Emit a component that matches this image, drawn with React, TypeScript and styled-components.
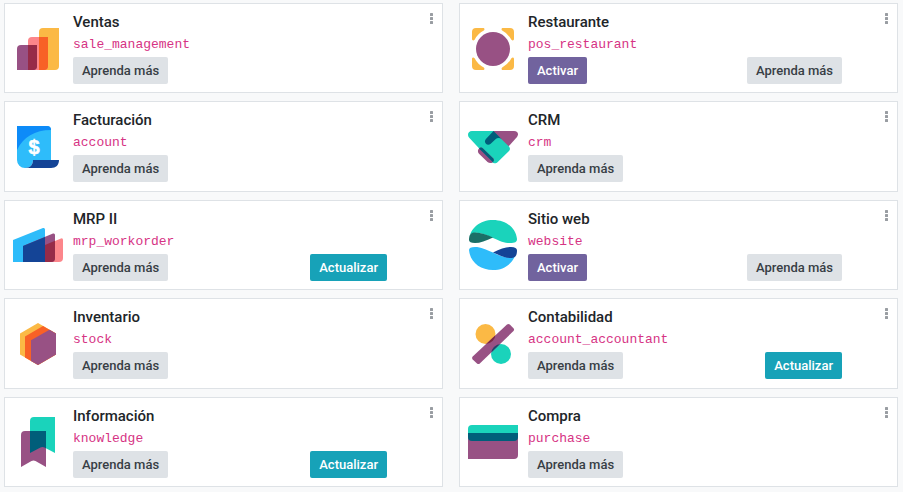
import React from "react";
import styled, { createGlobalStyle, css } from "styled-components";

const GlobalStyle = createGlobalStyle`
  *, *::before, *::after { box-sizing: border-box; }
  body {
    margin: 0;
    background: #f8f9fa;
    color: #212529;
    font-family: Roboto, "Noto Sans", sans-serif;
  }
`;

const Board = styled.main`
  display: grid;
  grid-template-columns: repeat(2, minmax(0, 1fr));
  grid-auto-rows: 1fr;
  gap: 8px 16px;
  min-height: 100vh;
  padding: 3px 5px 5px 4px;
`;

const Card = styled.article`
  display: flex;
  gap: 10px;
  padding: 8px 7px 7px 8px;
  background: #fff;
  border: 1px solid #dee2e6;
`;

const AppIcon = styled.svg`
  flex: none;
  align-self: center;
  width: 50px;
  height: 50px;
`;

const Details = styled.div`
  flex: 1;
  min-width: 0;
`;

const Title = styled.h2`
  margin: 0;
  font-size: 15px;
  font-weight: 500;
  line-height: 20px;
`;

const TechnicalName = styled.code`
  display: block;
  margin-top: 2px;
  color: #d63384;
  font-family: "Liberation Mono", monospace;
  font-size: 13px;
  line-height: 22px;
`;

const Actions = styled.div`
  display: flex;
  justify-content: space-between;
  margin-top: 1px;
  padding-right: 31px;
`;

type Variant = "primary" | "secondary" | "info";

const variants = {
  primary: css`background: #71639e; color: #fff;`,
  secondary: css`background: #dee2e6; color: #383e45;`,
  info: css`background: #17a2b8; color: #fff;`,
};

const ActionButton = styled.button<{ $variant: Variant }>`
  height: 27px;
  padding: 0 9px;
  border: 0;
  border-radius: 2px;
  font: 500 13px/27px Roboto, "Noto Sans", sans-serif;
  white-space: nowrap;
  cursor: pointer;
  ${(p) => variants[p.$variant]}
`;

const MenuButton = styled.button`
  display: flex;
  flex: none;
  justify-content: center;
  width: 7px;
  height: 15px;
  margin-top: 1px;
  padding: 0;
  background: none;
  border: 0;
  color: #999da2;
  cursor: pointer;
`;

const MenuDots = styled.svg`
  flex: none;
  width: 3px;
  height: 11px;
`;

const icons = {
  sales: (
    <>
      <path fill="#FBB945" d="M26 8a4 4 0 0 1 4-4h16v38a4 4 0 0 1-4 4H26Z" />
      <path fill="#FC868B" d="M15 17a4 4 0 0 1 4-4h16v29a4 4 0 0 1-4 4H15Z" />
      <path fill="#F86126" d="M26 13h9v29a4 4 0 0 1-4 4h-5Z" />
      <path fill="#985184" d="M4 25a4 4 0 0 1 4-4h16v21a4 4 0 0 1-4 4H4Z" />
      <path fill="#962B48" d="M15 21h9v21a4 4 0 0 1-4 4h-5Z" />
    </>
  ),
  restaurant: (
    <>
      <path fill="#FBB945" d="M4 8a4 4 0 0 1 4-4h7c1.500 0 2 1.500 .8 2.600A21 21 0 0 0 6.600 15.800C5.500 17 4 16.500 4 15ZM46 8a4 4 0 0 0-4-4h-7c-1.500 0-2 1.500-.8 2.600a21 21 0 0 1 9.200 9.200C44.500 17 46 16.500 46 15ZM4 42a4 4 0 0 0 4 4h7c1.500 0 2-1.500 .8-2.600A21 21 0 0 1 6.600 34.200C5.500 33 4 33.500 4 35ZM46 42a4 4 0 0 1-4 4h-7c-1.500 0-2-1.500-.8-2.600a21 21 0 0 0 9.200-9.200C44.500 33 46 33.500 46 35Z" />
      <circle cx="25" cy="25" r="17" fill="#985184" />
    </>
  ),
  invoicing: (
    <>
      <path fill="#2EBCFA" d="M4 4h30a4 4 0 0 1 4 4v30H20c0 5-3 8-8 8a8 8 0 0 1-8-8Z" />
      <path fill="#0D8BF8" d="M4 4h30a4 4 0 0 1 4 4C22 8 10 15 4 28Z" />
      <path fill="#144496" d="M12 46c5 0 8-3 8-8h26c0 5-3 8-8 8Z" />
      <text x="21" y="32" fill="#fff" stroke="#fff" strokeWidth="0.500" fontFamily="Liberation Sans, sans-serif" fontSize="20" fontWeight="700" textAnchor="middle">$</text>
    </>
  ),
  crm: (
    <>
      <path fill="#985184" d="M25 9h21c4 0 5 3.500 3 6l-8.500 9.500L25 15Z" />
      <path fill="#1AD3BB" d="M4 9h21l16 15.500c1.300 1.500 1.300 3 0 4.500L30 39.700c-2 2-4.500 2-6.500 0L1 15.500C-1 13 0 9 4 9Z" />
      <path fill="#005E7A" d="m25.500 9 8.300 8.200c-2-1.700-4.600-1.600-6.300 0l-4.800 4.600c-1.500 1.300-3.500 1.300-4.800 0s-1.300-3.300 0-4.700Z" />
      <path fill="#985184" d="M11 26.500c1.200-1.200 2.800-1.200 4 0L26 37c-.5 4.500-4 5-6.500 3L11 31.700c-1.500-1.700-1.500-3.700 0-5.200Z" />
      <path fill="#005E7A" d="M11 26.500c1.200-1.200 2.800-1.200 4 0l10.500 10.200q1 1.500-.5 3.600L11 26.500Z" />
    </>
  ),
  mrp: (
    <>
      <path fill="#2EBCFA" d="M0 20 30 8q2-.5 2 1.500V42H0Z" />
      <path fill="#FC868B" d="M22 29.200 48 18.400q2-.5 2 1.600v18a4 4 0 0 1-4 4H22Z" />
      <path fill="#985184" d="M10 26 40 13.500q2-.5 2 1.500v23a4 4 0 0 1-4 4H10Z" />
      <path fill="#144496" d="m10 26 22-9v25H10Z" />
      <path fill="#962B48" d="m32 25 10-4.200V38a4 4 0 0 1-4 4h-6Z" />
    </>
  ),
  website: (
    <>
      <path fill="#1AD3BB" d="M1 20C2 8 12 0 25 0s23 8 24 19c0 3-2 4-7 4-6 0-10-2-17-5C16 14 9 11 3 14c-1 1-2 3-2 6Z" />
      <path fill="#1B6F67" d="M1 20c0-4 1-7 5-7.500 6-.5 12 2 19 5C18 21 12 23 7 23c-4 0-6-1-6-3Z" />
      <path fill="#2EBCFA" d="M1 30c0-2 2-3 6-3 6 0 11 2.500 18 5.500 8 4 16 7 22 3.500C43 45 35 50 25 50 12 50 2 42 1 30Z" />
      <path fill="#144496" d="M25 32.500C32 29 38 27 43 27c4 0 6 1.200 6 3.500 0 4-1 7-5 7.500-6 .5-12-2.300-19-5.500Z" />
    </>
  ),
  inventory: (
    <>
      <path fill="#FBB945" d="m25 4 18 10.500v21L25 46 7 35.500v-21Z" />
      <path fill="#F86126" d="M30 7 43 14.500v21L25 46l-13-7.500V17.500Z" />
      <path fill="#985184" d="m36.500 10.700 6.500 3.800v21L25 46l-7-4V21.300Z" />
    </>
  ),
  accounting: (
    <>
      <defs>
        <clipPath id="ledger-bar">
          <path d="m39 5.500q1.400-1.200 2.800 0l3.700 3.700q1.200 1.400 0 2.800L11.800 44.500q-1.400 1.200-2.800 0l-4.300-4.100q-1.200-1.400 0-2.800Z" />
        </clipPath>
      </defs>
      <circle cx="17.500" cy="15" r="10" fill="#FBB945" />
      <circle cx="33" cy="35" r="10" fill="#1AD3BB" />
      <g clipPath="url(#ledger-bar)">
        <path fill="#985184" d="M0 0h50v50H0Z" />
        <circle cx="17.500" cy="15" r="10" fill="#7D2945" />
        <circle cx="33" cy="35" r="10" fill="#23456D" />
      </g>
    </>
  ),
  knowledge: (
    <>
      <path fill="#1AD3BB" d="M17 4a4 4 0 0 1 4-4h21v36l-10.500-5.500q-2-1-4 0L17 36Z" />
      <path fill="#985184" d="M8 18a4 4 0 0 1 4-4h21v36l-10.500-6q-2-1-4 0L8 50Z" />
      <path fill="#005E7A" d="M17 14h16v17.300l-1.500-.8q-2-1-4 0L17 36Z" />
    </>
  ),
  purchase: (
    <>
      <path fill="#985184" d="M0 16h50v22a4 4 0 0 1-4 4H0Z" />
      <path fill="#1AD3BB" d="M0 12a4 4 0 0 1 4-4h46v8H0Z" />
      <path fill="#005E7A" d="M0 16h50v4a4 4 0 0 1-4 4H4a4 4 0 0 1-4-4Z" />
    </>
  ),
};

interface Module {
  title: string;
  name: string;
  icon: keyof typeof icons;
  actions: [string, Variant][];
}

const learn: [string, Variant] = ["Aprenda más", "secondary"];
const activate: [string, Variant] = ["Activar", "primary"];
const upgrade: [string, Variant] = ["Actualizar", "info"];

const modules: Module[] = [
  { title: "Ventas", name: "sale_management", icon: "sales", actions: [learn] },
  { title: "Restaurante", name: "pos_restaurant", icon: "restaurant", actions: [activate, learn] },
  { title: "Facturación", name: "account", icon: "invoicing", actions: [learn] },
  { title: "CRM", name: "crm", icon: "crm", actions: [learn] },
  { title: "MRP II", name: "mrp_workorder", icon: "mrp", actions: [learn, upgrade] },
  { title: "Sitio web", name: "website", icon: "website", actions: [activate, learn] },
  { title: "Inventario", name: "stock", icon: "inventory", actions: [learn] },
  { title: "Contabilidad", name: "account_accountant", icon: "accounting", actions: [learn, upgrade] },
  { title: "Información", name: "knowledge", icon: "knowledge", actions: [learn, upgrade] },
  { title: "Compra", name: "purchase", icon: "purchase", actions: [learn] },
];

function ModuleCard({ title, name, icon, actions }: Module) {
  return (
    <Card>
      <AppIcon viewBox="0 0 50 50" aria-hidden="true">{icons[icon]}</AppIcon>
      <Details>
        <Title>{title}</Title>
        <TechnicalName>{name}</TechnicalName>
        <Actions>
          {actions.map(([label, variant]) => (
            <ActionButton key={label} type="button" $variant={variant}>{label}</ActionButton>
          ))}
        </Actions>
      </Details>
      <MenuButton type="button" aria-label={`Opciones de ${title}`}>
        <MenuDots viewBox="0 0 3 11" fill="currentColor" aria-hidden="true">
          <rect width="3" height="3" rx="0.500" />
          <rect y="4" width="3" height="3" rx="0.500" />
          <rect y="8" width="3" height="3" rx="0.500" />
        </MenuDots>
      </MenuButton>
    </Card>
  );
}

export default function App() {
  return (
    <>
      <GlobalStyle />
      <Board>
        {modules.map((module) => <ModuleCard key={module.name} {...module} />)}
      </Board>
    </>
  );
}
